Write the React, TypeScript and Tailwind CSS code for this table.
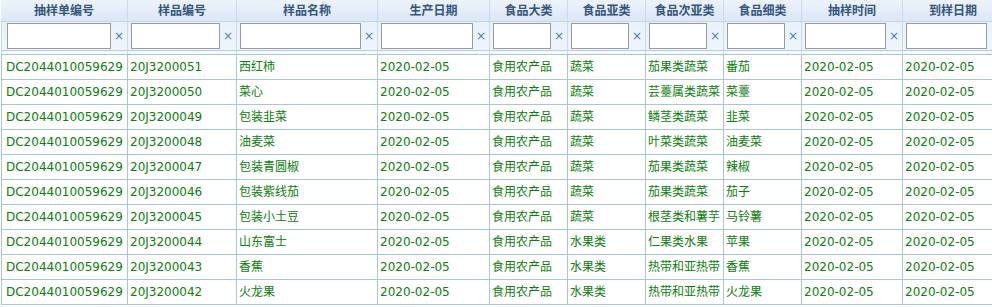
import React from "react";

const headers = ["抽样单编号", "样品编号", "样品名称", "生产日期", "食品大类", "食品亚类", "食品次亚类", "食品细类", "抽样时间", "到样日期"];

const rows: [string, string, string, string, string, string][] = [
  ["20J3200051", "西红柿", "蔬菜", "茄果类蔬菜", "番茄", ""],
  ["20J3200050", "菜心", "蔬菜", "芸薹属类蔬菜", "菜薹", ""],
  ["20J3200049", "包装韭菜", "蔬菜", "鳞茎类蔬菜", "韭菜", ""],
  ["20J3200048", "油麦菜", "蔬菜", "叶菜类蔬菜", "油麦菜", ""],
  ["20J3200047", "包装青圆椒", "蔬菜", "茄果类蔬菜", "辣椒", ""],
  ["20J3200046", "包装紫线茄", "蔬菜", "茄果类蔬菜", "茄子", ""],
  ["20J3200045", "包装小土豆", "蔬菜", "根茎类和薯芋", "马铃薯", ""],
  ["20J3200044", "山东富士", "水果类", "仁果类水果", "苹果", ""],
  ["20J3200043", "香蕉", "水果类", "热带和亚热带", "香蕉", ""],
  ["20J3200042", "火龙果", "水果类", "热带和亚热带", "火龙果", ""],
];

const gridCols = "grid grid-cols-[126px_109px_141px_112px_78px_78px_78px_78px_101px_101px]";
const font = { fontFamily: '"DejaVu Sans", "Noto Sans CJK SC", sans-serif' };

export default function App() {
  return (
    <div className="w-[992px] h-[307px] overflow-hidden bg-white text-[12px]" style={font}>
      <div className="w-[1003px] pl-[1px]">
        {/* Header */}
        <div className={`${gridCols} h-[22px] border-b border-[#c3d7ec] bg-gradient-to-b from-[#edf3fb] to-[#dbe7f5]`}>
          {headers.map((h, i) => (
            <div
              key={h}
              className={`flex items-center justify-center font-bold text-[#34557f] whitespace-nowrap overflow-hidden ${i === 0 ? "" : "border-l border-[#c8dbef]"}`}
            >
              {h}
            </div>
          ))}
        </div>
        {/* Filter row */}
        <div className={`${gridCols} h-[29px] border-b border-[#b3cce6] bg-gradient-to-b from-[#e8f0fa] to-[#eff5fc]`}>
          {headers.map((h, i) => (
            <div
              key={h}
              className={`flex items-center border-l border-[#c8dbef] ${i === 0 ? "pl-[5px]" : "pl-[3px]"}`}
            >
              <div className="flex-1 h-[26px] bg-white border border-[#9b9b9b]" />
              <div className="w-[16px] flex items-center justify-center text-[#4b7fc1] text-[12px] leading-none">
                {i === headers.length - 1 ? "" : "×"}
              </div>
            </div>
          ))}
        </div>
        {/* Gap */}
        <div className={`${gridCols} h-[4px] border-b border-[#a8c5e0] bg-[#f6f9fd]`}>
          {headers.map((h) => (
            <div key={h} className="border-l border-[#c8dbef]" />
          ))}
        </div>
        {/* Body */}
        {rows.map((r) => {
          const cells = [
            "DC2044010059629",
            r[0],
            r[1],
            "2020-02-05",
            "食用农产品",
            r[2],
            r[3],
            r[4],
            "2020-02-05",
            "2020-02-05",
          ];
          return (
            <div key={r[0]} className={`${gridCols} h-[25px] border-b border-[#a8c5e0]`}>
              {cells.map((c, i) => (
                <div
                  key={i}
                  className={`flex items-center border-l border-[#a8c5e0] whitespace-nowrap overflow-hidden text-[#0b800b] ${i === 0 ? "pl-[4px]" : "pl-[2px]"}`}
                >
                  {c}
                </div>
              ))}
            </div>
          );
        })}
      </div>
    </div>
  );
}
